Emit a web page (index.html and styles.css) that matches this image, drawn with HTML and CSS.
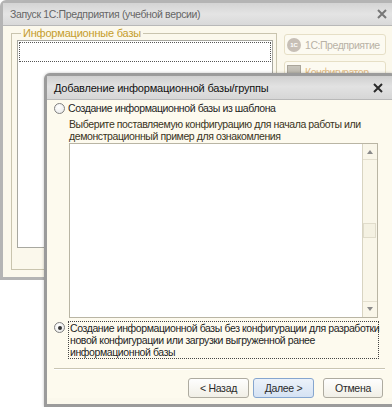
FILE: index.html
```html
<!DOCTYPE html>
<html lang="ru">
<head>
    <meta charset="UTF-8">
    <title>Запуск 1С:Предприятия</title>
    <link rel="stylesheet" href="styles.css">
</head>
<body>
<div class="desktop">
    <div class="win main-win">
        <div class="titlebar inactive">
            <span class="title">Запуск 1С:Предприятия (учебной версии)</span>
            <svg class="close" width="10" height="10" viewBox="0 0 10 10"><path d="M1 1L9 9M9 1L1 9"/></svg>
        </div>
        <div class="main-body">
            <fieldset class="bases">
                <legend>Информационные базы</legend>
                <div class="base-list">
                    <div class="base-row"></div>
                </div>
            </fieldset>
            <div class="side">
                <button class="side-btn" disabled>
                    <span class="ico-1c">1С</span>
                    <span class="side-text gray">1С:Предприятие</span>
                </button>
                <button class="side-btn" disabled>
                    <span class="ico-cfg"></span>
                    <span class="side-text">Конфигуратор</span>
                </button>
            </div>
        </div>
    </div>

    <div class="win dialog">
        <div class="titlebar">
            <span class="title">Добавление информационной базы/группы</span>
            <svg class="close" width="10" height="10" viewBox="0 0 10 10"><path d="M1 1L9 9M9 1L1 9"/></svg>
        </div>
        <div class="dlg-body">
            <label class="opt">
                <span class="radio"></span>
                <span class="opt-text">Создание информационной базы из шаблона</span>
            </label>
            <p class="hint">Выберите поставляемую конфигурацию для начала работы или<br>демонстрационный пример для ознакомления</p>
            <div class="tpl-list">
                <div class="tpl-area"></div>
                <div class="scroll">
                    <span class="arrow up"></span>
                    <span class="thumb"></span>
                    <span class="arrow down"></span>
                </div>
            </div>
            <label class="opt opt2">
                <span class="radio checked"></span>
                <span class="opt-text focus">Создание информационной базы без конфигурации для разработки<br>новой конфигурации или загрузки выгруженной ранее<br>информационной базы</span>
            </label>
            <div class="sep"></div>
            <div class="buttons">
                <button class="btn back">&lt; Назад</button>
                <button class="btn next">Далее &gt;</button>
                <button class="btn cancel">Отмена</button>
            </div>
        </div>
    </div>
</div>
</body>
</html>
```

FILE: styles.css
```css
html, body {
    margin: 0;
    padding: 0;
    background: #ffffff;
    overflow: hidden;
}
.desktop {
    position: relative;
    width: 392px;
    height: 407px;
    overflow: hidden;
    font-family: "Liberation Sans", Arial, sans-serif;
    font-size: 10.5px;
    letter-spacing: -0.4px;
    color: #2a2a2a;
    white-space: nowrap;
}
.win {
    box-sizing: border-box;
    border: 3px solid #a4a4a4;
    border-radius: 6px 6px 0 0;
    background: #fbf8ec;
}
.main-win {
    width: 398px;
    height: 280px;
    border-color: #b4b4b4;
}
.titlebar {
    display: flex;
    align-items: center;
    justify-content: space-between;
    height: 22px;
    padding: 0 7px 0 7px;
    background: linear-gradient(#cfcfcf, #e2e2e2 45%, #d6d6d6);
    border-bottom: 1px solid #b8b8b8;
}
.titlebar .title {
    font-size: 11px;
    letter-spacing: -0.2px;
    color: #111;
}
.titlebar .close {
    stroke: #2a2a2a;
    stroke-width: 2;
}
.titlebar.inactive {
    background: linear-gradient(#d4d4d4, #e4e4e4 50%, #d9d9d9);
    padding-right: 8px;
}
.titlebar.inactive .title {
    font-size: 10.5px;
    letter-spacing: -0.35px;
    color: #666;
}
.titlebar.inactive .close {
    stroke: #777;
}
.main-body {
    display: flex;
    padding: 0 0 0 8px;
}
.bases {
    margin: 1px 0 0 0;
    padding: 0 3px 0 5px;
    width: 266px;
    height: 243px;
    box-sizing: border-box;
    border: 1px solid #c9c4ae;
}
.bases legend {
    padding: 0 2px;
    margin-left: 4px;
    color: #c59d2c;
    font-size: 11px;
    letter-spacing: -0.2px;
    line-height: 13px;
}
.base-list {
    height: 208px;
    background: #fff;
    border: 1px solid #a8a8a0;
    box-sizing: border-box;
    padding: 1px;
}
.base-row {
    height: 18px;
    border: 1px dotted #555;
}
.side {
    display: flex;
    flex-direction: column;
    gap: 6px;
    margin: 8px 0 0 7px;
}
.side-btn {
    display: flex;
    align-items: center;
    gap: 4px;
    width: 102px;
    height: 21px;
    padding: 0 0 0 2px;
    border: 1px solid #e6dfc6;
    border-radius: 3px;
    background: #fcfaf1;
    font-family: inherit;
    font-size: 10.5px;
    letter-spacing: -0.45px;
    overflow: visible;
}
.side-text {
    color: #e2bb84;
}
.side-text.gray {
    color: #b9b2a6;
}
.ico-1c {
    flex: none;
    display: inline-flex;
    align-items: center;
    justify-content: center;
    width: 14px;
    height: 14px;
    border-radius: 50%;
    background: #c7bfb6;
    color: #fff;
    font-size: 6px;
    letter-spacing: 0;
    font-weight: bold;
}
.ico-cfg {
    flex: none;
    width: 14px;
    height: 13px;
    background: linear-gradient(#c9c6bd, #b4b0a6);
    border: 1px solid #aaa59a;
    box-sizing: border-box;
}
.dialog {
    position: absolute;
    left: 44px;
    top: 73px;
    width: 352px;
    height: 334px;
    border-color: #9b9b9b;
    box-shadow: 0 0 3px rgba(0, 0, 0, 0.25);
}
.dialog .titlebar {
    height: 23px;
    padding-left: 7px;
    padding-right: 10px;
}
.dlg-body {
    display: flex;
    flex-direction: column;
    padding: 2px 0 0 7px;
    background: #fdfaee;
}
.opt {
    display: flex;
    align-items: flex-start;
    gap: 3px;
    line-height: 13px;
    color: #1e1e1e;
}
.radio {
    flex: none;
    box-sizing: border-box;
    width: 11px;
    height: 11px;
    margin-top: 1px;
    border: 1px solid #808080;
    border-radius: 50%;
    background: radial-gradient(circle at 40% 35%, #ffffff, #e6e6e6);
    position: relative;
}
.radio.checked::after {
    content: "";
    position: absolute;
    left: 2.5px;
    top: 2.5px;
    width: 4px;
    height: 4px;
    border-radius: 50%;
    background: #333;
}
.hint {
    margin: 3px 0 0 15px;
    line-height: 12px;
    color: #3a3422;
}
.tpl-list {
    display: flex;
    margin: 1px 0 0 15px;
    width: 309px;
    height: 175px;
    box-sizing: border-box;
    border: 1px solid #b9b5a4;
    background: #fff;
}
.tpl-area {
    flex: 1;
}
.scroll {
    position: relative;
    width: 14px;
    background: #f9f6e9;
    border-left: 1px solid #d8d4c2;
}
.arrow {
    position: absolute;
    left: 0;
    width: 14px;
    height: 15px;
}
.arrow::after {
    content: "";
    position: absolute;
    left: 4px;
    border-left: 3px solid transparent;
    border-right: 3px solid transparent;
}
.arrow.up {
    top: 0;
    border-bottom: 1px solid #e3dfcf;
}
.arrow.up::after {
    top: 6px;
    border-bottom: 4px solid #8a8a8a;
}
.arrow.down {
    bottom: 0;
    border-top: 1px solid #e3dfcf;
}
.arrow.down::after {
    top: 5px;
    border-top: 4px solid #8a8a8a;
}
.thumb {
    position: absolute;
    left: 0;
    top: 79px;
    width: 13px;
    height: 15px;
    border: 1px solid #e0dccb;
    box-sizing: border-box;
    background: #f4f1e2;
}
.opt2 {
    margin-top: 3px;
}
.opt2 .radio {
    margin-top: 1px;
}
.focus {
    width: 311px;
    box-sizing: border-box;
    padding: 0 0 0 1px;
    line-height: 12px;
    border: 1px dotted #444;
}
.sep {
    margin: 9px 8px 0 0;
    height: 1px;
    background: #c9c5b3;
    border-bottom: 1px solid #fff;
}
.buttons {
    display: flex;
    justify-content: flex-end;
    gap: 4px;
    padding: 8px 10px 0 0;
}
.btn {
    height: 20px;
    padding: 0;
    border: 1px solid #aeaba0;
    border-radius: 3px;
    background: linear-gradient(#fefefe, #f1efe6);
    font-family: inherit;
    font-size: 10.5px;
    letter-spacing: -0.3px;
    color: #2a2a2a;
}
.back {
    width: 61px;
}
.next {
    width: 61px;
    border-color: #86a6cf;
    background: linear-gradient(#ecf2fa, #d5e2f3);
}
.cancel {
    width: 60px;
    margin-left: 5px;
}
```
